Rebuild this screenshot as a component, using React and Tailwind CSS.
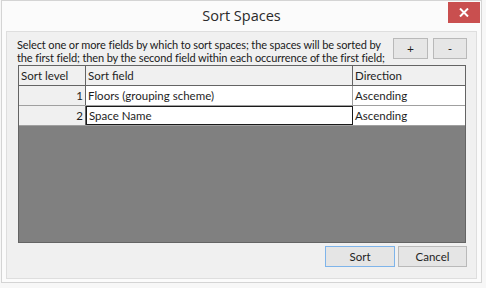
import React from "react";

const rows = [
  { level: 1, field: "Floors (grouping scheme)", dir: "Ascending" },
  { level: 2, field: "Space Name", dir: "Ascending" },
];

export default function App() {
  return (
    <div
      className="w-[486px] h-[288px] bg-[#f7f7f7] overflow-hidden text-[#1e1e1e]"
      style={{ fontFamily: 'Lato, "Open Sans", sans-serif' }}
    >
      <div className="ml-[1px] w-[481px] h-[283px] flex flex-col bg-[#fbfbfb] border border-[#d4d4d4]">
        {/* title bar */}
        <div className="h-[30px] grid grid-cols-[1fr_auto_1fr] items-start">
          <div />
          <div
            className="pt-[5px] text-[14.5px] leading-[20px] text-[#2a2a2a]"
            style={{ fontFamily: '"Open Sans", sans-serif' }}
          >
            Sort Spaces
          </div>
          <div className="flex justify-end pr-[1px] pt-[1px]">
            <button className="w-[32px] h-[21px] bg-[#c94f4f] flex items-center justify-center">
              <svg width="10" height="9" viewBox="0 0 10 9">
                <path d="M1 0.5 L9 8.5 M9 0.5 L1 8.5" stroke="#fff" strokeWidth="2" />
              </svg>
            </button>
          </div>
        </div>

        {/* content panel */}
        <div className="mx-[4px] h-[248px] bg-[#f0f0f0] border border-[#dedede] flex flex-col">
          <div className="flex items-start pt-[6px] pl-[10px] pr-[9px]">
            <p className="flex-1 min-w-0 text-[11px] leading-[13px] tracking-[-0.12px] text-[#1a1a1a] whitespace-nowrap">
              Select one or more fields by which to sort spaces; the spaces will be sorted by
              <br />
              the first field; then by the second field within each occurrence of the first field;
            </p>
            <div className="flex gap-[5px] shrink-0">
              <button className="w-[35px] h-[21px] bg-[#e6e6e6] border border-[#b9b9b9] text-[12px] leading-[12px]">+</button>
              <button className="w-[34px] h-[21px] bg-[#e6e6e6] border border-[#b9b9b9] text-[12px] leading-[12px]">-</button>
            </div>
          </div>

          {/* table */}
          <div className="mt-[1px] ml-[11px] w-[448px] h-[178px] border border-[#646464] bg-[#808080] flex flex-col text-[11.5px]">
            <div className="grid grid-cols-[67px_267px_1fr] h-[20px] bg-[#f0f0f0] border-b border-[#646464]">
              <div className="px-[2px] leading-[19px] border-r border-[#646464]">Sort level</div>
              <div className="px-[2px] leading-[19px] border-r border-[#646464]">Sort field</div>
              <div className="px-[2px] leading-[19px]">Direction</div>
            </div>
            {rows.map((r, i) => (
              <div key={r.level} className="grid grid-cols-[67px_267px_1fr] h-[20px] border-b border-[#a0a0a0]">
                <div className="px-[2px] leading-[19px] text-right bg-[#f0f0f0] border-r border-[#646464]">
                  {r.level}
                </div>
                <div
                  className={
                    i === 1
                      ? "px-[2px] leading-[17px] bg-white border border-[#1a1a1a]"
                      : "px-[2px] leading-[19px] bg-white border-r border-[#a0a0a0]"
                  }
                >
                  {r.field}
                </div>
                <div className="px-[2px] leading-[19px] bg-white">{r.dir}</div>
              </div>
            ))}
          </div>

          {/* footer */}
          <div className="flex justify-end gap-[3px] pr-[9px] pt-[3px]">
            <button className="w-[70px] h-[21px] bg-[#e5e5e5] border border-[#7eb4ea] text-[11.5px]">Sort</button>
            <button className="w-[69px] h-[21px] bg-[#e5e5e5] border border-[#b9b9b9] text-[11.5px]">Cancel</button>
          </div>
        </div>
      </div>
    </div>
  );
}
